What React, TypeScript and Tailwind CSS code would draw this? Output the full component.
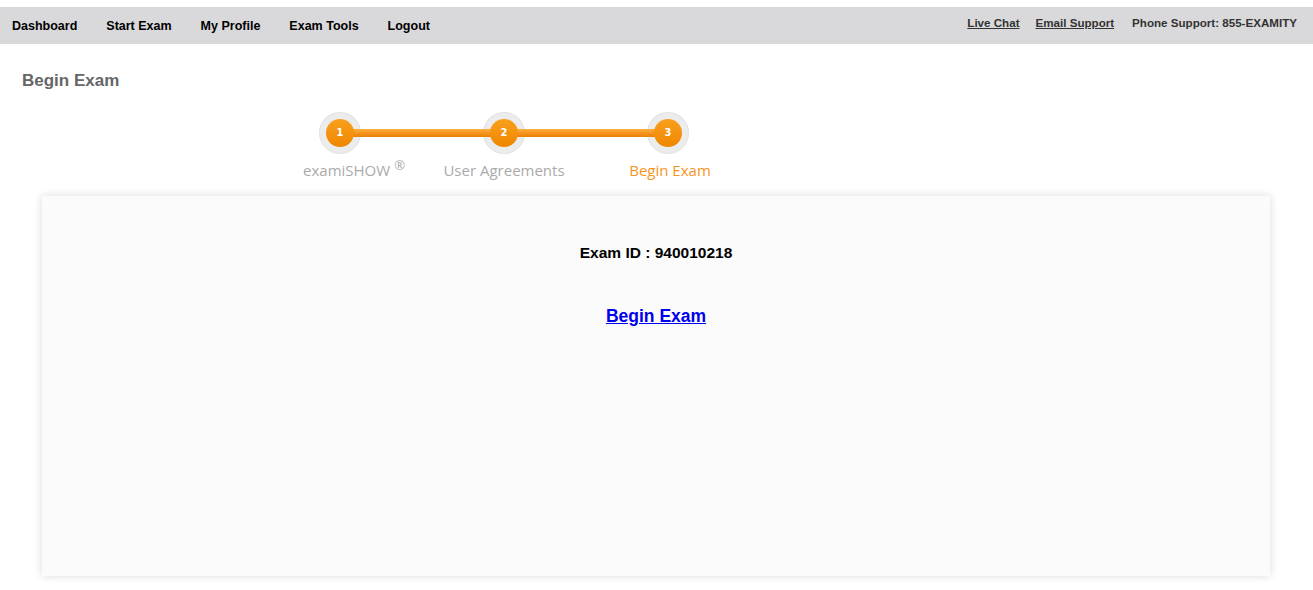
const steps = [
  { n: 1, label: "examiSHOW", sup: true, active: false },
  { n: 2, label: "User Agreements", sup: false, active: false },
  { n: 3, label: "Begin Exam", sup: false, active: true },
];

const StepCircle = ({ n }: { n: number }) => (
  <div className="w-[42px] h-[42px] rounded-full bg-[#ececec] shadow-[inset_0_0_2px_rgba(0,0,0,0.12)] flex items-center justify-center">
    <div className="relative z-[2] w-[28px] h-[28px] rounded-full bg-gradient-to-b from-[#f9a01b] to-[#ee8600] flex items-center justify-center text-white text-[11px] font-bold font-['DejaVu_Sans_Condensed','Liberation_Sans',sans-serif]">
      {n}
    </div>
  </div>
);

export default function App() {
  return (
    <div className="min-h-[590px] bg-white font-['Liberation_Sans',Arial,sans-serif]">
      <nav className="mt-[7px] h-[37px] bg-[#d9d9db] flex items-center justify-between pl-[12px] pr-[16px]">
        <ul className="flex items-center gap-[29px] text-[12.5px] font-bold text-black pt-[2px]">
          <li>Dashboard</li>
          <li>Start Exam</li>
          <li>My Profile</li>
          <li>Exam Tools</li>
          <li>Logout</li>
        </ul>
        <div className="flex items-center text-[11.6px] font-bold text-[#333] -mt-[6px]">
          <a className="underline mr-[16px]">Live Chat</a>
          <a className="underline mr-[18px]">Email Support</a>
          <span>Phone Support: 855-EXAMITY</span>
        </div>
      </nav>

      <h1 className="mt-[26px] ml-[22px] text-[17px] font-bold text-[#666] leading-[22px]">
        Begin Exam
      </h1>

      <div className="ml-[258px] mt-[20px] relative w-[492px]">
        <div className="absolute z-[1] left-[82px] right-[82px] top-[17px] h-[8px] rounded-full bg-gradient-to-b from-[#fbb040] via-[#f7941d] to-[#e88200]" />
        <div className="grid grid-cols-3">
          {steps.map((s) => (
            <div key={s.n} className="flex flex-col items-center">
              <StepCircle n={s.n} />
              <div
                className={`mt-[6px] text-[15px] leading-[20px] font-['Open_Sans',sans-serif] ${
                  s.active ? "text-[#f7941d] ml-[4px]" : "text-[#aaa]"
                } ${s.sup ? "ml-[28px]" : ""}`}
              >
                {s.label}
                {s.sup && <sup className="ml-[4px] text-[13px]">®</sup>}
              </div>
            </div>
          ))}
        </div>
      </div>

      <div className="mt-[16px] ml-[42px] mr-[43px] h-[380px] bg-[#fbfbfb] shadow-[0_0_9px_rgba(0,0,0,0.14)] flex flex-col items-center pt-[47px]">
        <p className="text-[15.5px] font-bold text-black leading-[20px]">Exam ID : 940010218</p>
        <a className="mt-[42px] text-[17.5px] font-bold text-[#0000ee] underline leading-[22px]" href="#">
          Begin Exam
        </a>
      </div>
    </div>
  );
}
